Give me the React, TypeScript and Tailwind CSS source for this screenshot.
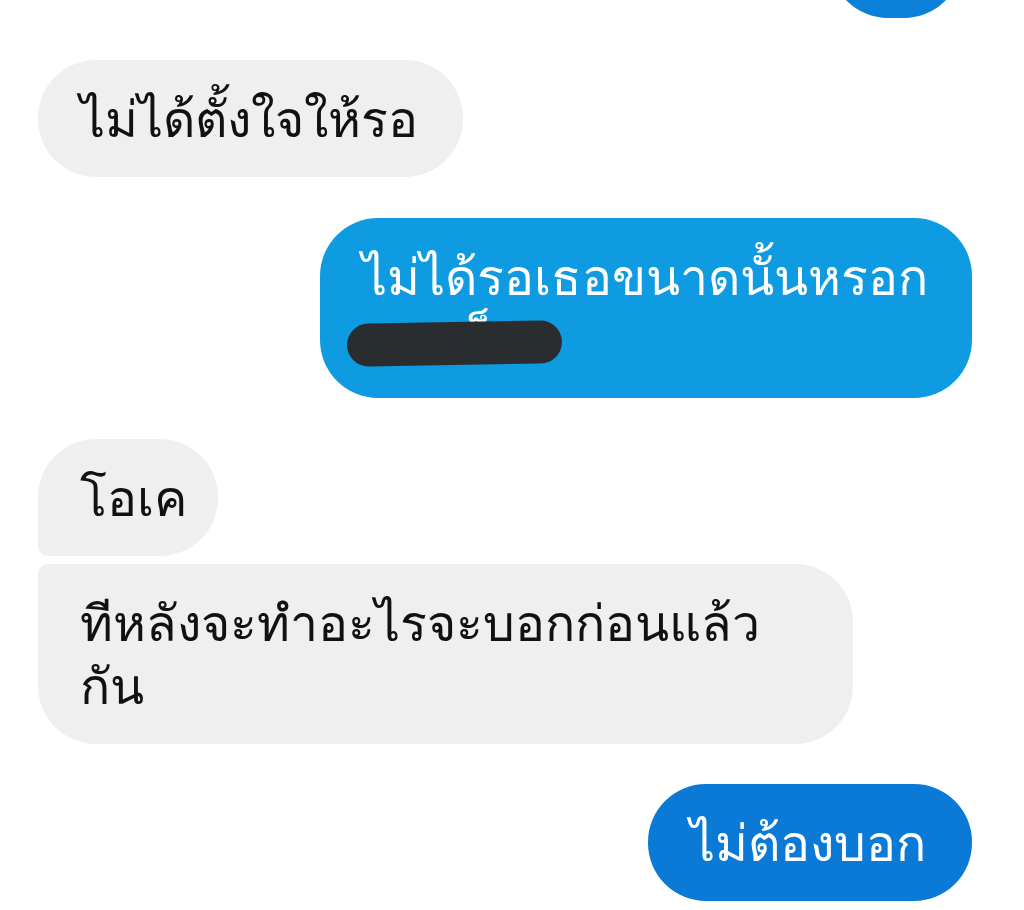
import React from 'react';

const font = { fontFamily: '"Noto Sans", "Liberation Sans", sans-serif' };

function Bubble({
  children,
  mine,
  className = '',
}: {
  children: React.ReactNode;
  mine?: boolean;
  className?: string;
}) {
  return (
    <div
      className={
        'px-[42px] py-[27px] text-[50px] leading-[63px] whitespace-nowrap ' +
        (mine ? 'text-white self-end ' : 'text-[#111] bg-[#efefef] self-start ') +
        className
      }
    >
      {children}
    </div>
  );
}

export default function App() {
  return (
    <div className="w-[1024px] h-[910px] bg-white overflow-hidden" style={font}>
      <div className="flex flex-col pl-[38px] pr-[52px]">
        {/* previous message, mostly scrolled off */}
        <div className="self-end mr-[10px] -mt-[99px] w-[132px] h-[117px] rounded-[58px] bg-[#0a80d8]" />

        <Bubble className="mt-[42px] w-[425px] rounded-[58px]">ไม่ได้ตั้งใจให้รอ</Bubble>

        <Bubble mine className="mt-[41px] w-[652px] rounded-[58px] bg-[#0f9be1]">
          <div>ไม่ได้รอเธอขนาดนั้นหรอก</div>
          <div className="relative h-[63px]">
            <span className="absolute left-[102px] top-[-3px]">ก็</span>
            {/* redacted name */}
            <div className="absolute left-[-15px] top-[14px] w-[215px] h-[43px] rounded-[22px] bg-[#2a2d30] -rotate-[1deg]" />
          </div>
        </Bubble>

        <Bubble className="mt-[41px] w-[180px] rounded-[58px] rounded-bl-[10px]">โอเค</Bubble>

        <Bubble className="mt-[8px] w-[815px] rounded-[58px] rounded-tl-[10px]">
          ทีหลังจะทำอะไรจะบอกก่อนแล้ว
          <br />
          กัน
        </Bubble>

        <Bubble mine className="mt-[40px] w-[324px] rounded-[58px] bg-[#0a7ad6]">ไม่ต้องบอก</Bubble>
      </div>
    </div>
  );
}
